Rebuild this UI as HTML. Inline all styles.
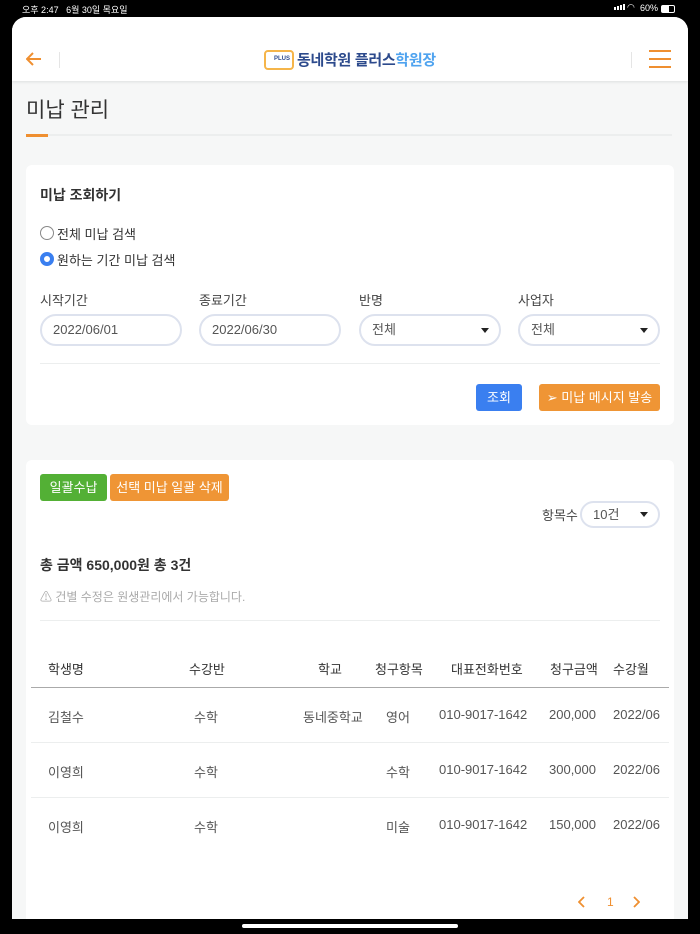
<!DOCTYPE html>
<html><head><meta charset="utf-8"><style>
*{margin:0;padding:0;box-sizing:border-box}
body{width:700px;height:934px;background:#000;position:relative;overflow:hidden;font-family:"Liberation Sans","Noto Sans CJK KR",sans-serif;color:#333}
.a{position:absolute;white-space:nowrap}
.scr{position:absolute;left:12px;top:17px;width:676px;height:902px;background:#f6f7f7;border-radius:14px 14px 0 0;overflow:hidden}
.card{position:absolute;background:#fff;border-radius:6px}
.inp{position:absolute;height:32px;border:2px solid #dde2ee;border-radius:16px;background:#fff;font-size:13px;color:#555;padding-left:11px;line-height:28px}
.tri{position:absolute;right:10px;top:12px;width:0;height:0;border-left:4px solid transparent;border-right:4px solid transparent;border-top:5px solid #222}
.btn{position:absolute;color:#fff;font-size:13px;text-align:center;border-radius:3px}
.th{font-size:13px;color:#333}
.td{font-size:13px;color:#555}
</style></head><body>
<div class="a" style="left:22px;top:3px;font-size:9px;color:#fff">오후 2:47 &nbsp; 6월 30일 목요일</div>
<div class="a" style="left:614px;top:7px;width:2px;height:3px;background:#fff"></div>
<div class="a" style="left:617px;top:6px;width:2px;height:4px;background:#fff"></div>
<div class="a" style="left:620px;top:5px;width:2px;height:5px;background:#fff"></div>
<div class="a" style="left:623px;top:4px;width:2px;height:6px;background:#fff"></div>
<div class="a" style="left:627px;top:2px;font-size:9px;color:#fff">◠</div>
<div class="a" style="left:640px;top:3px;font-size:9px;color:#fff">60%</div>
<div class="a" style="left:661px;top:5px;width:14px;height:8px;border:1px solid #fff;border-radius:2px"><div style="width:7px;height:6px;background:#fff"></div></div>
<div class="scr">
  <div class="a" style="left:0;top:0;width:676px;height:64px;background:#fff;box-shadow:0 1px 3px rgba(0,0,0,.1)"></div>
  <svg class="a" style="left:14px;top:35px" width="16" height="14" viewBox="0 0 16 14"><path d="M15 7H2M7 1L1 7l6 6" stroke="#ef8f30" stroke-width="2" fill="none"/></svg>
  <div class="a" style="left:47px;top:35px;width:1px;height:16px;background:#e5e5e5"></div>
  <div class="a" style="left:619px;top:35px;width:1px;height:16px;background:#e5e5e5"></div>
  <div class="a" style="left:637px;top:33px;width:22px;height:2px;background:#ef8f30"></div>
  <div class="a" style="left:637px;top:41px;width:22px;height:2px;background:#ef8f30"></div>
  <div class="a" style="left:637px;top:49px;width:22px;height:2px;background:#ef8f30"></div>
  <div class="a" style="left:252px;top:33px;width:30px;height:20px;border:2px solid #f5b54a;border-radius:4px;font-size:6px;color:#2d4b8f;font-weight:bold;padding:4px 0 0 8px">PLUS</div>
  <div class="a" style="left:285px;top:32px;font-size:15px;font-weight:bold;color:#2c4a8c;letter-spacing:-0.3px">동네학원 플러스<span style="color:#4fa3ef">학원장</span></div>
  <div class="a" style="left:14px;top:77px;font-size:21px;color:#333">미납 관리</div>
  <div class="a" style="left:14px;top:117px;width:646px;height:2px;background:#eceeee"></div>
  <div class="a" style="left:14px;top:117px;width:22px;height:3px;background:#ef8f30"></div>

  <div class="card" style="left:14px;top:148px;width:648px;height:260px"></div>
  <div class="a" style="left:28px;top:168px;font-size:14px;font-weight:bold;color:#333">미납 조회하기</div>
  <div class="a" style="left:28px;top:209px;width:14px;height:14px;border:1.5px solid #888;border-radius:50%"></div>
  <div class="a" style="left:45px;top:207px;font-size:13px;color:#333">전체 미납 검색</div>
  <div class="a" style="left:28px;top:235px;width:14px;height:14px;border:4px solid #3a7ff0;border-radius:50%;background:#fff"></div>
  <div class="a" style="left:45px;top:233px;font-size:13px;color:#333">원하는 기간 미납 검색</div>
  <div class="a" style="left:28px;top:273px;font-size:13px;color:#444">시작기간</div>
  <div class="a" style="left:187px;top:273px;font-size:13px;color:#444">종료기간</div>
  <div class="a" style="left:347px;top:273px;font-size:13px;color:#444">반명</div>
  <div class="a" style="left:506px;top:273px;font-size:13px;color:#444">사업자</div>
  <div class="inp" style="left:28px;top:297px;width:142px">2022/06/01</div>
  <div class="inp" style="left:187px;top:297px;width:142px">2022/06/30</div>
  <div class="inp" style="left:347px;top:297px;width:142px">전체<div class="tri"></div></div>
  <div class="inp" style="left:506px;top:297px;width:142px">전체<div class="tri"></div></div>
  <div class="a" style="left:28px;top:346px;width:620px;height:1px;background:#eceeee"></div>
  <div class="btn" style="left:464px;top:367px;width:46px;height:27px;line-height:27px;background:#3a7ff0">조회</div>
  <div class="btn" style="left:527px;top:367px;width:121px;height:27px;line-height:27px;background:#ef9535">➢ 미납 메시지 발송</div>

  <div class="card" style="left:14px;top:443px;width:648px;height:470px"></div>
  <div class="btn" style="left:28px;top:457px;width:67px;height:27px;line-height:27px;background:#53b035">일괄수납</div>
  <div class="btn" style="left:98px;top:457px;width:119px;height:27px;line-height:27px;background:#ef9535">선택 미납 일괄 삭제</div>
  <div class="a" style="left:530px;top:488px;font-size:13px;color:#444">항목수</div>
  <div class="inp" style="left:568px;top:484px;width:80px;height:27px;line-height:23px">10건<div class="tri" style="top:9px"></div></div>
  <div class="a" style="left:28px;top:538px;font-size:14px;font-weight:bold;color:#333">총 금액 650,000원 총 3건</div>
  <div class="a" style="left:28px;top:571px;font-size:12px;color:#aaa">⚠ 건별 수정은 원생관리에서 가능합니다.</div>
  <div class="a" style="left:28px;top:603px;width:620px;height:1px;background:#eceeee"></div>

  <div class="a th" style="left:36px;top:642px">학생명</div>
  <div class="a th" style="left:177px;top:642px">수강반</div>
  <div class="a th" style="left:306px;top:642px">학교</div>
  <div class="a th" style="left:363px;top:642px">청구항목</div>
  <div class="a th" style="left:439px;top:642px">대표전화번호</div>
  <div class="a th" style="left:538px;top:642px">청구금액</div>
  <div class="a th" style="left:601px;top:642px">수강월</div>
  <div class="a" style="left:19px;top:670px;width:638px;height:1px;background:#aaa"></div>

  <div class="a td" style="left:36px;top:690px">김철수</div>
  <div class="a td" style="left:182px;top:690px">수학</div>
  <div class="a td" style="left:291px;top:690px">동네중학교</div>
  <div class="a td" style="left:374px;top:690px">영어</div>
  <div class="a td" style="left:427px;top:690px">010-9017-1642</div>
  <div class="a td" style="left:537px;top:690px">200,000</div>
  <div class="a td" style="left:601px;top:690px">2022/06</div>
  <div class="a" style="left:19px;top:725px;width:638px;height:1px;background:#eceeee"></div>

  <div class="a td" style="left:36px;top:745px">이영희</div>
  <div class="a td" style="left:182px;top:745px">수학</div>
  <div class="a td" style="left:374px;top:745px">수학</div>
  <div class="a td" style="left:427px;top:745px">010-9017-1642</div>
  <div class="a td" style="left:537px;top:745px">300,000</div>
  <div class="a td" style="left:601px;top:745px">2022/06</div>
  <div class="a" style="left:19px;top:780px;width:638px;height:1px;background:#eceeee"></div>

  <div class="a td" style="left:36px;top:800px">이영희</div>
  <div class="a td" style="left:182px;top:800px">수학</div>
  <div class="a td" style="left:374px;top:800px">미술</div>
  <div class="a td" style="left:427px;top:800px">010-9017-1642</div>
  <div class="a td" style="left:537px;top:800px">150,000</div>
  <div class="a td" style="left:601px;top:800px">2022/06</div>

  <svg class="a" style="left:566px;top:879px" width="8" height="12" viewBox="0 0 8 12"><path d="M6 1L1 6l5 5" stroke="#ef8f30" stroke-width="1.8" fill="none"/></svg>
  <div class="a" style="left:595px;top:878px;font-size:12px;color:#ef8f30">1</div>
  <svg class="a" style="left:620px;top:879px" width="8" height="12" viewBox="0 0 8 12"><path d="M2 1l5 5-5 5" stroke="#ef8f30" stroke-width="1.8" fill="none"/></svg>
</div>
<div class="a" style="left:242px;top:924px;width:216px;height:4px;background:#fff;border-radius:2px"></div>
</body></html>
